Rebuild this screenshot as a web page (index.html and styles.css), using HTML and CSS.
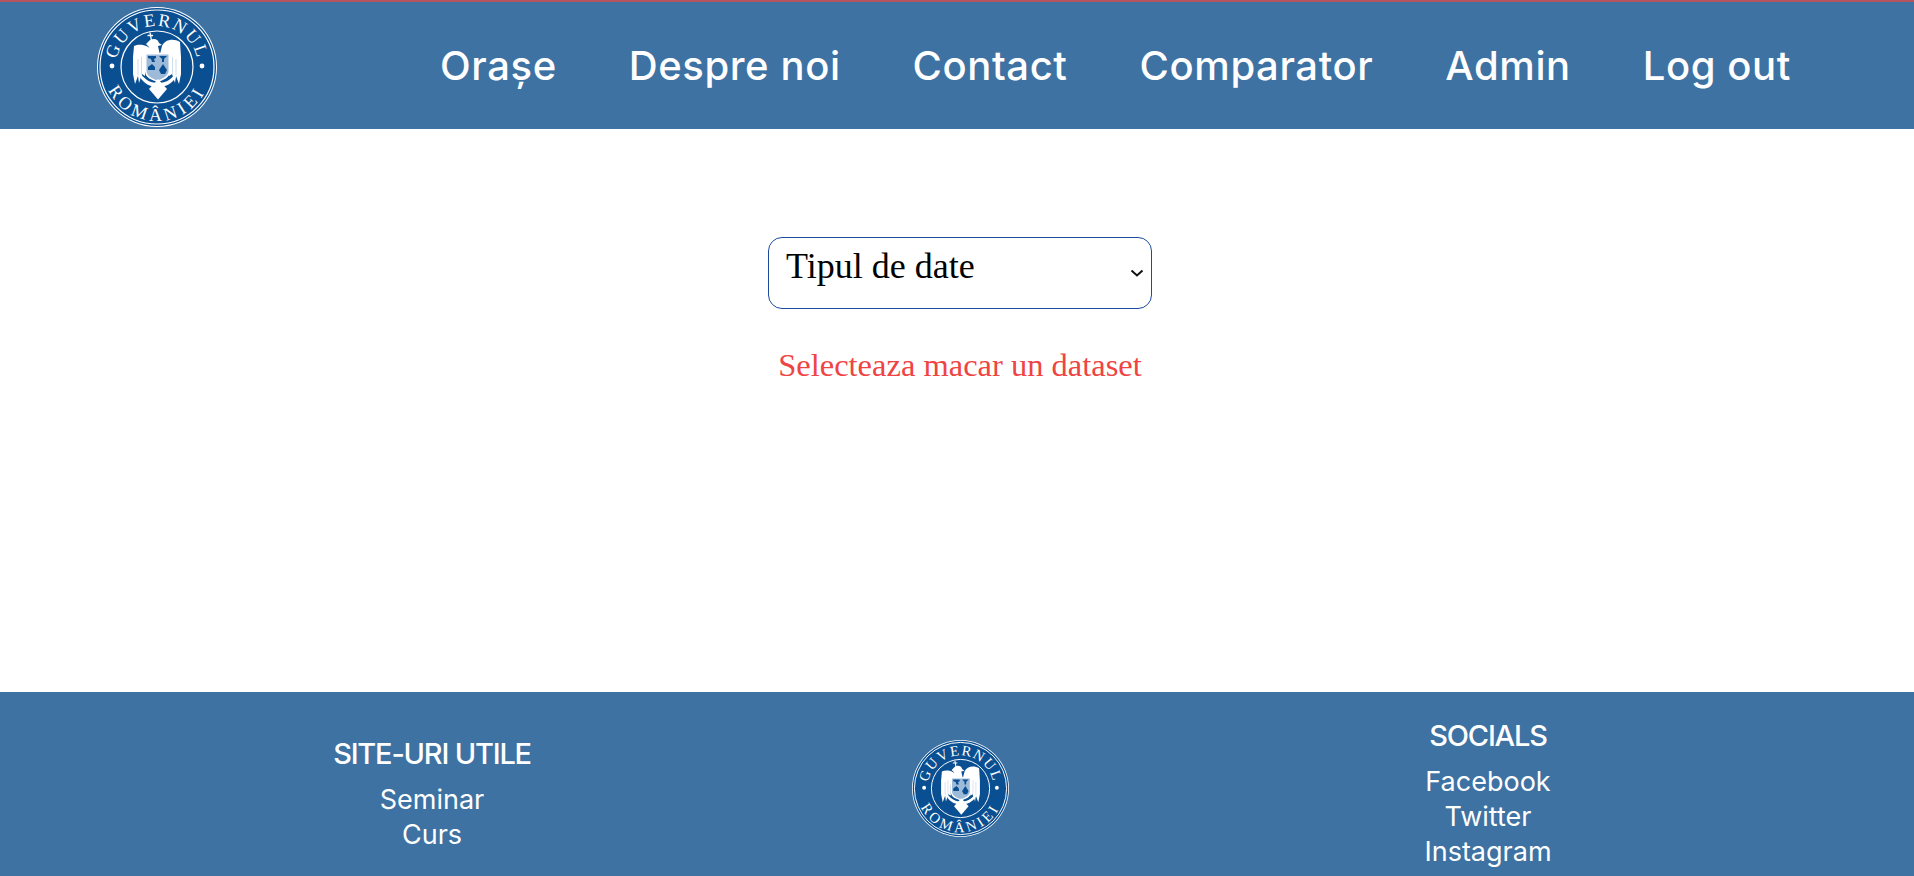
FILE: index.html
```html
<!DOCTYPE html>
<html lang="ro">
<head>
    <meta charset="UTF-8">
    <meta name="viewport" content="width=device-width, initial-scale=1.0">
    <title>Tipul de date</title>
    <link rel="stylesheet" href="styles.css">
</head>
<body>
    <header class="header">
        <!-- Sigla guvernului, refolosita in footer -->
        <svg class="header-logo" viewBox="-60 -60 120 120">
            <g id="logoMark">
                <circle r="60" fill="#fff"/>
                <circle r="59" fill="#0a4f92"/>
                <circle r="57" fill="none" stroke="#fff" stroke-width="1.2"/>
                <circle r="36" fill="none" stroke="#fff" stroke-width="1.2"/>
                <path id="arcTop" d="M-41 0A41 41 0 0 1 41 0" fill="none"/>
                <path id="arcBottom" d="M-54 0A54 54 0 0 0 54 0" fill="none"/>
                <text class="logo-text"><textPath href="#arcTop" startOffset="50%" text-anchor="middle">GUVERNUL</textPath></text>
                <text class="logo-text logo-text-wide"><textPath href="#arcBottom" startOffset="50%" text-anchor="middle">ROMÂNIEI</textPath></text>
                <circle cx="-45" cy="-1" r="2.4" fill="#fff"/>
                <circle cx="45" cy="-1" r="2.4" fill="#fff"/>
                <!-- vultur -->
                <path d="M-7 -34.500l1.500 8M-9.500 -31.500h5.500" stroke="#fff" stroke-width="1.3" fill="none"/>
                <path d="M-7 -27c4-2 8-1 9 3l3 2-4 1 2 9-10 2-1-10-3-3z" fill="#fff"/>
                <path d="M-4 -15c-4-7-13-9-19-6l-1 11 0 17 2 10 3-8 1 7 3-9 3 2 0-13 1-7 7-2z" fill="#fff"/>
                <path d="M3 -13l2-8c3-7 12-8 18-4l1 15 0 17-2 10-3-8-1 7-3-9-3 2 0-13-1-7-8-2z" fill="#fff"/>
                <path d="M-19 -8v16M-15.500 -10v17M19 -8v16M15.500 -10v17" stroke="#b9cfe4" stroke-width="0.7" fill="none"/>
                <path d="M-12 -14h25v18c0 7-7 9-12 11-6-2-13-4-13-11z" fill="#fff"/>
                <path d="M-10.500 -12.500h22v16c0 6-6 8-11 10-5-2-11-4-11-10z" fill="#9dbbd8"/>
                <path d="M-9 -11h8v2l-2 1 1 3h-3l-1-3-3-1zM2 -11h8l-3 3v3h-2v-3zM-9 0l4-3 3 3v3h-7zM2 3l4-6 4 6-2 4h-4z" fill="#0a4f92"/>
                <path d="M-16 7c5 7 11 9 17 9s12-2 17-9l1 3c-4 7-11 10-18 10s-14-3-18-10z" fill="#fff"/>
                <path d="M1 12l9 10-9 10.500-9-10.500z" fill="#fff"/>
            </g>
        </svg>
        <nav class="nav">
            <a href="#">Orașe</a>
            <a href="#">Despre noi</a>
            <a href="#">Contact</a>
            <a href="#">Comparator</a>
            <a href="#">Admin</a>
            <a href="#">Log out</a>
        </nav>
    </header>

    <main class="content">
        <div class="select-wrap">
            <select class="data-select">
                <option>Tipul de date</option>
                <option>Populatie</option>
                <option>Somaj</option>
            </select>
            <svg class="select-arrow" viewBox="0 0 14 8"><path d="M1.500 1.500L7 6.500l5.500-5" fill="none" stroke="#111" stroke-width="2"/></svg>
        </div>
        <p class="error">Selecteaza macar un dataset</p>
    </main>

    <footer class="footer">
        <div class="footer-col">
            <h3>SITE-URI UTILE</h3>
            <a href="#">Seminar</a>
            <a href="#">Curs</a>
        </div>
        <div class="footer-col">
            <svg class="footer-logo" viewBox="-60 -60 120 120"><use href="#logoMark"/></svg>
        </div>
        <div class="footer-col">
            <h3>SOCIALS</h3>
            <a href="#">Facebook</a>
            <a href="#">Twitter</a>
            <a href="#">Instagram</a>
        </div>
    </footer>
</body>
</html>
```

FILE: styles.css
```css
html, body {
    margin: 0;
    padding: 0;
    height: 876px;
    overflow: hidden;
}
body {
    background-color: #fff;
    font-family: "Liberation Serif", serif;
}
.logo-text {
    font-family: "Liberation Serif", serif;
    font-size: 18px;
    letter-spacing: 1.8px;
    fill: #fff;
}
.logo-text-wide {
    letter-spacing: 4px;
}
.header {
    height: 127px;
    background-color: #3d72a3;
    border-top: 2px solid #b4545c;
    display: flex;
    align-items: center;
    justify-content: space-between;
    padding: 0 123px 0 97px;
}
.header-logo {
    width: 120px;
    height: 120px;
    margin-top: 3px;
}
.nav {
    display: flex;
    gap: 72px;
}
.nav a {
    color: #fff;
    text-decoration: none;
    font-family: Inter, sans-serif;
    font-size: 40px;
    font-weight: 500;
    letter-spacing: 0.6px;
}
.content {
    height: 563px;
    box-sizing: border-box;
    display: flex;
    flex-direction: column;
    align-items: center;
    padding: 108px 0 0 6px;
}
.select-wrap {
    position: relative;
    width: 384px;
    height: 72px;
}
.data-select {
    appearance: none;
    display: block;
    box-sizing: border-box;
    width: 100%;
    height: 100%;
    padding: 0 0 14px 17px;
    border: 1px solid #1c4a9c;
    border-radius: 14px;
    background-color: #fff;
    color: #000;
    font-family: "Liberation Serif", serif;
    font-size: 36px;
}
.select-arrow {
    position: absolute;
    right: 8px;
    top: 32px;
    width: 14px;
    height: 8px;
    pointer-events: none;
}
.error {
    margin: 38px 0 0;
    color: #ef4444;
    font-size: 32.5px;
}
.footer {
    box-sizing: border-box;
    height: 194px;
    background-color: #3d72a3;
    display: grid;
    grid-template-columns: repeat(3, 528px);
    justify-content: center;
    align-items: center;
    padding: 5px 0 0 6px;
    color: #fff;
}
.footer-col {
    display: flex;
    flex-direction: column;
    align-items: center;
    font-family: Inter, sans-serif;
}
.footer-col h3 {
    margin: 0 0 6px;
    font-size: 29px;
    font-weight: 500;
    line-height: 44px;
    letter-spacing: -1.2px;
}
.footer-col a {
    color: #fff;
    text-decoration: none;
    font-size: 27px;
    line-height: 35px;
}
.footer-logo {
    width: 97px;
    height: 97px;
    margin-bottom: 7px;
}
```
